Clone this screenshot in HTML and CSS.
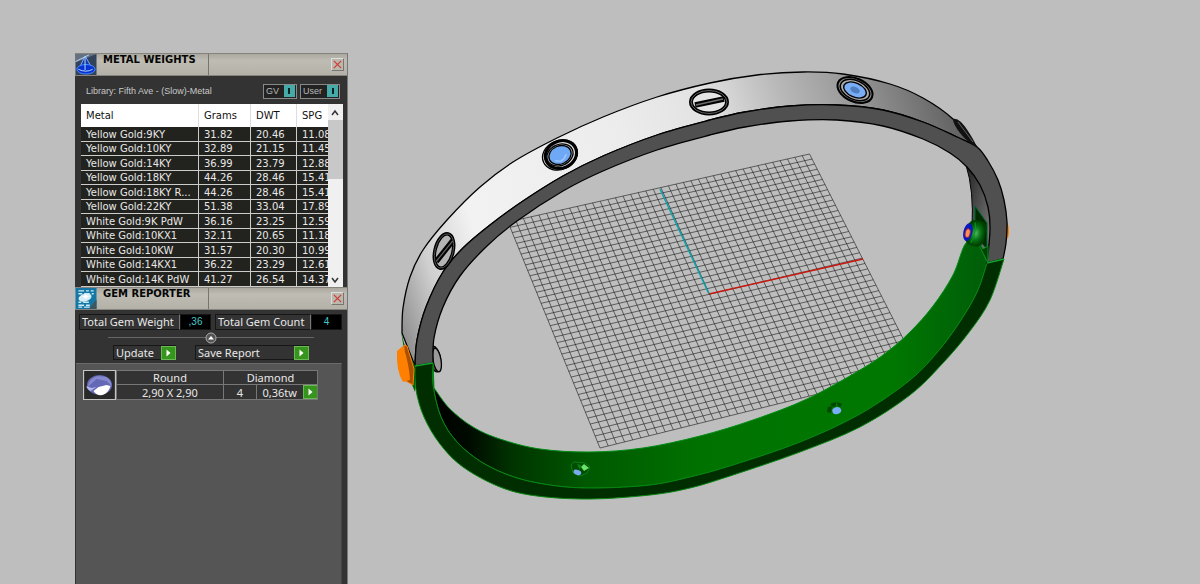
FILE: index.html
```html
<!DOCTYPE html>
<html lang="en">
<head>
<meta charset="utf-8">
<title>Bracelet – Metal Weights</title>
<link rel="stylesheet" href="styles.css">
</head>
<body>
<main class="desktop">
  <svg class="scene" viewBox="0 0 1200 584" preserveAspectRatio="xMinYMin meet" role="img" aria-label="Bracelet model in perspective view">
    <defs>
      <linearGradient id="metal" gradientUnits="userSpaceOnUse" x1="402" y1="340" x2="978" y2="150">
        <stop offset="0" stop-color="#8c8c8c"/><stop offset=".08" stop-color="#cfcfcf"/><stop offset=".17" stop-color="#f2f2f2"/>
        <stop offset=".45" stop-color="#ececec"/><stop offset=".6" stop-color="#e2e2e2"/><stop offset=".72" stop-color="#b8b8b8"/><stop offset=".84" stop-color="#969696"/><stop offset="1" stop-color="#5c5c5c"/>
      </linearGradient>
      <linearGradient id="green" gradientUnits="userSpaceOnUse" x1="435" y1="0" x2="990" y2="0">
        <stop offset="0" stop-color="#000"/><stop offset=".06" stop-color="#000a00"/><stop offset=".14" stop-color="#003400"/><stop offset=".27" stop-color="#005800"/>
        <stop offset=".48" stop-color="#007200"/><stop offset=".82" stop-color="#007800"/><stop offset="1" stop-color="#005c0a"/>
      </linearGradient>
      <linearGradient id="inside" x1="0" y1="0" x2="1" y2="1"><stop offset="0" stop-color="#222"/><stop offset="1" stop-color="#8a8a8a"/></linearGradient>
      <radialGradient id="barrel"><stop offset="0" stop-color="#55b560"/><stop offset=".5" stop-color="#087818"/><stop offset="1" stop-color="#004000"/></radialGradient>
    </defs>
    <path id="grid" class="grid"/>
    <path class="axis-y" d="M709 294 660 189"/>
    <path class="axis-x" d="M709 294 863 259"/>

    <g class="ink">
      <ellipse cx="435" cy="359" rx="5.500" ry="13" fill="#555" transform="rotate(-10 435 359)"/>
      <ellipse cx="437" cy="360" rx="4" ry="12" fill="#999" transform="rotate(-10 437 360)"/>
    </g>
    <path d="M1005 222q4 0 4 9t-4 9z" fill="#ff8000"/>
    <path d="M966 165Q974 190 972 228L988 264 993 210 982 180z" fill="url(#inside)" stroke="#000"/>
    <path d="M975 206 987 223 987 249 975 236z" fill="#002c00" stroke="#063"/>
    <path id="green-inner" fill="url(#green)" stroke="#008c14"/>
    <path id="green-side" fill="#002e00" stroke="#07850f"/>
    <path id="white-band" class="ink" fill="url(#metal)"/>
    <path id="dark-band" class="ink" fill="#505050"/>
    <path d="M415 366 433 363M987 263 1004 259" stroke="#11a32a" stroke-width="1.500"/>

    <path d="M401 331 404 343 415 366 415 392 408 375z" fill="#006400"/>
    <path d="M404 345 407 346 414 369 413 385 404 380z" fill="#a85000" stroke="#ff8000"/>
    <path d="M397 351 403 346Q409 363 410 380L403 382Q396 371 397 351z" fill="#ff8000"/>

    <path d="M978 243q4 3 5 6l5-3v17z" fill="#004000" stroke="#0b8f22"/>
    <g transform="rotate(12 972 232)">
      <rect x="967" y="220" width="18" height="25" rx="7" fill="url(#barrel)" stroke="#004400"/>
      <path d="M973 222q4 10 0 21" fill="none" stroke="#0a9824"/>
      <ellipse cx="968" cy="233" rx="4.500" ry="9" fill="#0719bd"/>
      <ellipse cx="968" cy="234" rx="2.500" ry="4.500" fill="#ff9050" stroke="#8b2058"/>
    </g>

    <g class="ink" transform="translate(444 251) rotate(14)">
      <ellipse rx="9" ry="17.500" fill="#b4b4b4" stroke-width="3.500"/><path d="M-5 12 6-12" stroke-width="5.500"/><path d="M-5 12 6-12" stroke="#666" stroke-width="1.200"/>
      <ellipse rx="9" ry="17.500" fill="none" stroke="#6b6b6b" stroke-width=".7"/>
    </g>
    <g class="ink" transform="translate(709 102)">
      <ellipse rx="18" ry="11.500" fill="#e4e4e4" stroke-width="4"/><path d="M-14 3 15-3" stroke-width="5.500"/><path d="M-13 3 14-3" stroke="#6c6c6c" stroke-width="1.500"/>
      <ellipse rx="18" ry="11.500" fill="none" stroke="#777" stroke-width=".8"/>
    </g>
    <g class="ink" transform="translate(560 155) rotate(-24)">
      <ellipse rx="18" ry="14.500" fill="#ddd"/><ellipse cx="1" rx="16" ry="13.500" fill="none" stroke-width="3"/>
      <ellipse rx="13.500" ry="10.500" fill="#c6c6c6"/><ellipse rx="11.500" ry="9" fill="#6fa8f5"/>
      <path d="M-7 3-2 6 2 5 6 2" fill="none" stroke="#a6cbfb"/>
    </g>
    <g class="ink" transform="translate(855 90) rotate(24)">
      <ellipse rx="18.500" ry="11.500" fill="#888" stroke-width="2"/><ellipse rx="15.500" ry="9.500" fill="#aaa" stroke-width="1.500"/>
      <ellipse rx="12" ry="7" fill="#79adf5"/><ellipse rx="5" ry="3" fill="#4f7fc0" stroke="none"/>
    </g>
    <path d="M953 119Q959 117 968 131T976 147Q967 142 960 133T953 119z" fill="#111"/>
    <path d="M958 122 973 142" stroke="#666"/>

    <g transform="translate(580 468)">
      <path d="M-9-3-6-6 5-5 10-1 7 5 0 8-7 5z" fill="#004d00" stroke="#0a8a20" stroke-width=".8"/>
      <path d="M1-1 4-4 9 0 4 3z" fill="#69e468"/><path d="M-3-4 1-3 0 2z" fill="#0c801a"/><ellipse cx="-1" cy="5" rx="4" ry="2.500" fill="#79aaf0" transform="rotate(20)"/>
    </g>
    <g transform="translate(835 408)">
      <path d="M-8 4-7-1-3-2-4 5zM-5-4 1-6 1-2-2-1zM2-6 7-4 5-1 3-2z" fill="#004600"/>
      <ellipse cx="1" cy="3" rx="4.500" ry="3.500" fill="#79adfa" transform="rotate(-15)"/>
    </g>
  </svg>

  <div class="tools">
    <section class="window">
      <header class="titlebar">
        <svg class="app-icon" viewBox="0 0 22 22" aria-hidden="true"><rect width="22" height="22" fill="#34435c"/><path d="M0 0h22L0 9z" fill="#657080"/><path d="M3 17 10 2l8 14" fill="#103ca8" stroke="#7fb1ff"/><ellipse cx="11" cy="16" rx="9.500" ry="5" fill="#0733d0" stroke="#4b92ff"/><path d="M3 16q8 4 15 0M10 3v14M0 8l14-7" stroke="#b9dbff" fill="none"/></svg>
        <h2 class="title">METAL WEIGHTS</h2>
        <button class="close" aria-label="Close metal weights"><svg viewBox="0 0 12 12"><path d="m2 2 8 8m0-8-8 8"/></svg></button>
      </header>
      <div class="metal-body">
        <div class="library">
          <span class="library-name">Library: Fifth Ave - (Slow)-Metal</span>
          <button class="toggle">GV<i class="lamp"></i></button>
          <button class="toggle">User<i class="lamp"></i></button>
        </div>
        <div class="list">
          <div class="list-view">
            <table class="metals">
              <colgroup><col class="c-metal"><col class="c-grams"><col class="c-dwt"><col class="c-spg"></colgroup>
              <thead><tr><th>Metal</th><th>Grams</th><th>DWT</th><th>SPG</th></tr></thead>
              <tbody>
                <tr><td>Yellow Gold:9KY</td><td>31.82</td><td>20.46</td><td>11.08</td></tr>
                <tr><td>Yellow Gold:10KY</td><td>32.89</td><td>21.15</td><td>11.45</td></tr>
                <tr><td>Yellow Gold:14KY</td><td>36.99</td><td>23.79</td><td>12.88</td></tr>
                <tr><td>Yellow Gold:18KY</td><td>44.26</td><td>28.46</td><td>15.41</td></tr>
                <tr><td>Yellow Gold:18KY R...</td><td>44.26</td><td>28.46</td><td>15.41</td></tr>
                <tr><td>Yellow Gold:22KY</td><td>51.38</td><td>33.04</td><td>17.89</td></tr>
                <tr><td>White Gold:9K PdW</td><td>36.16</td><td>23.25</td><td>12.59</td></tr>
                <tr><td>White Gold:10KX1</td><td>32.11</td><td>20.65</td><td>11.18</td></tr>
                <tr><td>White Gold:10KW</td><td>31.57</td><td>20.30</td><td>10.99</td></tr>
                <tr><td>White Gold:14KX1</td><td>36.22</td><td>23.29</td><td>12.61</td></tr>
                <tr><td>White Gold:14K PdW</td><td>41.27</td><td>26.54</td><td>14.37</td></tr>
              </tbody>
            </table>
          </div>
          <div class="scrollbar">
            <button class="arrow" aria-label="Scroll up"><svg viewBox="0 0 15 15"><path d="m4 10 3-4 3 4"/></svg></button>
            <div class="thumb"></div>
            <button class="arrow arrow-down" aria-label="Scroll down"><svg viewBox="0 0 15 15"><path d="m4 6 3 4 3-4"/></svg></button>
          </div>
        </div>
      </div>
    </section>

    <section class="window gem-window">
      <header class="titlebar">
        <svg class="app-icon" viewBox="0 0 22 22" aria-hidden="true"><rect width="22" height="22" fill="#1677a5"/><path d="M3 3h6m2 0h3m2 0h3M3 6h4m2 0h6m2 0h2M3 15h3m2 0h6M3 18h6m2 0h4M3 20h4m2 0h6" stroke="#c8ecfa" stroke-width="1.500"/><ellipse cx="10" cy="10" rx="7" ry="4" fill="#d8edf5" transform="rotate(-15 10 10)"/><path d="m7 9 4-2 3 2-3 2z" fill="#fff"/><path d="M22 12v10H14z" fill="#40565f"/></svg>
        <h2 class="title">GEM REPORTER</h2>
        <button class="close" aria-label="Close gem reporter"><svg viewBox="0 0 12 12"><path d="m2 2 8 8m0-8-8 8"/></svg></button>
      </header>
      <div class="gem-controls">
        <div class="totals">
          <span class="label">Total Gem Weight</span><output class="value">,36</output>
          <span class="label second">Total Gem Count</span><output class="value">4</output>
        </div>
        <div class="divider"><button class="knob" aria-label="Collapse"><svg viewBox="0 0 12 12"><circle cx="6" cy="6" r="5" fill="#555" stroke="#aaa"/><path d="M3 7.500 6 4l3 3.500z" fill="#fff"/></svg></button></div>
        <div class="actions">
          <button class="action">Update<svg class="go" viewBox="0 0 15 15"><path d="m5 3 5 4.500L5 12z"/></svg></button>
          <button class="action save">Save Report<svg class="go" viewBox="0 0 15 15"><path d="m5 3 5 4.500L5 12z"/></svg></button>
        </div>
      </div>
      <div class="gem-list">
        <div class="gem">
          <svg class="gem-icon" viewBox="0 0 30 28" role="img" aria-label="Round gem"><rect width="30" height="28" fill="#292929"/><ellipse cx="15" cy="14" rx="12.500" ry="10" fill="#6468b6"/><path d="M3 16q1-8 10-11l9 1q5 3 5 9l-5-5-10-2z" fill="#8589cd"/><path d="m9 20 5-4 8-2 4 1q-2 7-8 9-6 1-9-4z" fill="#fff"/><path d="m2 15 5 2 5-1-6 4q-4-2-4-5z" fill="#b3b6e8"/></svg>
          <table class="gem-table">
            <colgroup><col class="g-size"><col class="g-count"><col class="g-weight"><col class="g-go"></colgroup>
            <tr><td>Round</td><td colspan="3">Diamond</td></tr>
            <tr><td>2,90 X 2,90</td><td>4</td><td class="weight">0,36tw</td><td class="go-cell"><button class="go-button" aria-label="Gem options"><svg class="go" viewBox="0 0 15 15"><path d="m5 3 5 4.500L5 12z"/></svg></button></td></tr>
          </table>
        </div>
      </div>
    </section>
  </div>
</main>
<script src="scene.js"></script>
</body>
</html>
```
FILE: styles.css
```css
* { box-sizing: border-box; }
body { margin: 0; background: #bebebe; font: 10px/14px "DejaVu Sans", Verdana, sans-serif; color: #e8e8e8; }
button { margin: 0; padding: 0; border: 0; background: none; font: inherit; color: inherit; }
svg { display: block; }

.desktop { position: relative; display: flex; min-height: 100vh; overflow: hidden; }
.scene { position: absolute; inset: 0; width: 100%; height: auto; }
.grid { fill: none; stroke: #111; stroke-opacity: .72; stroke-width: .8; }
.axis-x { stroke: #c8190f; stroke-width: 1.5; }
.axis-y { stroke: #0aa2a8; stroke-width: 1.5; }
.ink { stroke: #000; stroke-width: 1.3; }

.tools { position: relative; display: flex; flex-direction: column; width: 273px; margin: 53px 0 0 75px; }
.window { background: #333; border-right: 1px solid #777; }
.gem-window { flex: 1; display: flex; flex-direction: column; }
.titlebar { display: flex; align-items: center; height: 23px; background: linear-gradient(#aaa89f, #bfbcb3 30%, #b4b1a8); border: 1px solid #85837c; border-width: 1px 0; color: #050505; }
.app-icon { flex: none; width: 22px; height: 21px; }
.title { align-self: stretch; width: 112px; margin: 0; padding-left: 6px; border-right: 1px solid #77756f; font-size: 10px; line-height: 11px; white-space: nowrap; }
.close { width: 13px; height: 13px; margin: 0 3px 0 auto; border: 1px solid; border-color: #ddd #77756f #77756f #ddd; background: #bbb8ae; }
.close path { fill: none; stroke: #d33a36; stroke-width: 1.3; }

.metal-body { padding: 7px 4px 0 6px; }
.library { display: flex; align-items: center; gap: 3px; height: 21px; padding: 0 3px 5px 5px; }
.library-name { flex: 1; font: 9px/14px "Liberation Sans", Arial, sans-serif; color: #c8c8c8; white-space: nowrap; }
.toggle { display: flex; align-items: center; justify-content: space-between; gap: 5px; height: 15px; padding: 0 1px 0 2px; border: 1px solid #888; background: #222; font: 9px/13px "Liberation Sans", Arial, sans-serif; color: #b8b8b8; }
.lamp { display: grid; place-items: center; width: 11px; height: 12px; background: #46aaa9; }
.lamp::after { content: ""; width: 2px; height: 6px; background: #062626; }
.list { display: flex; height: 183px; }
.list-view { flex: 1; min-width: 0; overflow: hidden; }
.metals { width: 262px; border-collapse: separate; border-spacing: 0; table-layout: fixed; }
.c-metal { width: 118px; }
.c-grams { width: 52px; }
.c-dwt { width: 46px; }
.c-spg { width: 46px; }
.metals th { height: 23px; padding: 0 5px; border-right: 1px solid #ddd; background: #fff; color: #111; font-weight: 400; text-align: left; }
.metals td { height: 15px; padding: 0 5px; overflow: hidden; border-right: 1px solid #ccc; border-bottom: 1px solid #ccc; background: #22221e; line-height: 13px; white-space: nowrap; }
.metals tr:nth-child(even) td { height: 14px; }
.scrollbar { display: flex; flex-direction: column; width: 15px; background: #f0f0f0; }
.arrow { height: 16px; }
.arrow path { fill: none; stroke: #333; stroke-width: 1.5; }
.arrow-down { margin-top: auto; }
.thumb { height: 59px; background: #c8c8c8; }

.gem-window { font: 11px/14px "Noto Sans", "DejaVu Sans", sans-serif; }
.gem-window .title { font: bold 10px/11px "DejaVu Sans", sans-serif; }
.gem-controls { padding: 4px 4px 3px; }
.totals { display: flex; height: 16px; line-height: 13px; }
.label { width: 101px; padding-left: 2px; border: 1px solid #161616; border-width: 1px 0 1px 1px; border-right: 1px solid #777; white-space: nowrap; }
.second { width: 96px; margin-left: 4px; }
.value { width: 31px; border: 1px solid #161616; background: #000; color: #47c8c8; text-align: center; font: 10px/14px "Liberation Sans", Arial, sans-serif; }
.divider { display: flex; align-items: center; justify-content: center; height: 15px; margin: 0 29px; background: linear-gradient(#666, #666) center / 100% 1px no-repeat; }
.knob { width: 12px; height: 12px; }
.actions { display: flex; gap: 19px; padding-left: 34px; }
.action { display: flex; justify-content: space-between; width: 63px; height: 15px; padding-left: 2px; border: 1px solid #171717; border-right: 0; white-space: nowrap; line-height: 13px; }
.save { width: 114px; }
.go { width: 15px; height: 14px; background: #35951c; border: 1px solid #6bb955; }
.go path { fill: #fff; }
.gem-list { flex: 1; width: 266px; margin-left: 1px; padding: 6px 0 0 7px; border-top: 1px solid #6b6b6b; border-right: 1px solid #444; background: #555; }
.gem { display: flex; }
.gem-icon { width: 33px; height: 30px; border: 1px solid #c4c4c4; }
.gem-table { width: 201px; height: 30px; border-collapse: collapse; table-layout: fixed; background: #333; }
.g-size { width: 107px; }
.g-count { width: 33px; }
.g-weight { width: 46px; }
.g-go { width: 15px; }
.gem-table td { height: 14px; padding: 0; border: 1px solid #777; text-align: center; line-height: 13px; white-space: nowrap; }
.gem-table .weight { border-right: 0; }
.gem-table .go-cell { border-left: 0; }
.go-button { display: block; }
```
FILE: scene.js
```js
// Construction grid: a unit square mapped onto four projected corners.
const TL = [508, 222], TR = [809.5, 154], BR = [918.5, 369], BL = [600, 448];
function makeProjection([x0, y0], [x1, y1], [x2, y2], [x3, y3]) {
  const dx1 = x1 - x2, dx2 = x3 - x2, dx3 = x0 - x1 + x2 - x3;
  const dy1 = y1 - y2, dy2 = y3 - y2, dy3 = y0 - y1 + y2 - y3;
  const det = dx1 * dy2 - dx2 * dy1;
  const g = (dx3 * dy2 - dx2 * dy3) / det;
  const h = (dx1 * dy3 - dx3 * dy1) / det;
  return (u, v) => {
    const w = g * u + h * v + 1;
    return [((x1 - x0 + g * x1) * u + (x3 - x0 + h * x3) * v + x0) / w,
            ((y1 - y0 + g * y1) * u + (y3 - y0 + h * y3) * v + y0) / w];
  };
}
const project = makeProjection(TL, TR, BR, BL);
const cells = 40;
let grid = "";
for (let i = 0; i <= cells; i++) {
  const t = i / cells;
  grid += `M${project(t, 0)}L${project(t, 1)}M${project(0, t)}L${project(1, t)}`;
}
document.getElementById("grid").setAttribute("d", grid);

// Smooth curve through a list of points.
function curve(p) {
  let d = `${p[0]}`;
  for (let i = 0; i < p.length - 1; i++) {
    const a = p[i - 1] || p[i], b = p[i], c = p[i + 1], e = p[i + 2] || c;
    d += `C${b[0] + (c[0] - a[0]) / 6},${b[1] + (c[1] - a[1]) / 6} ${c[0] - (e[0] - b[0]) / 6},${c[1] - (e[1] - b[1]) / 6} ${c}`;
  }
  return d;
}
function band(id, one, two) {
  document.getElementById(id).setAttribute("d", `M${curve(one)}L${curve([...two].reverse())}Z`);
}
const outer = [[402,333],[403,308],[410,277],[423,250],[447,220],[480,187],[513,162],[557,138],[603,117],[657,97],[710,83],[757,75],[803,72],[843,74],[890,84],[923,98],[953,119],[977,147]];
const rim = [[415,366],[417,340],[426,307],[443,272],[463,248],[490,225],[523,201],[563,176],[603,156],[657,135],[710,120],[745,112],[790,106],[837,105],[883,110],[923,122],[957,137],[977,147]];
const rimEnd = [[988,161],[998,180],[1004,200],[1007,222],[1006,243],[1003,259]];
const inner = [[433,363],[434,338],[443,307],[460,276],[487,246],[517,221],[563,191],[603,171],[657,150],[710,135],[745,127],[790,121],[837,120],[883,126],[923,139],[950,153],[967,167],[980,185],[988,207],[990,230],[987,263]];
const greenTop = [[434,388],[450,409],[473,427],[500,439],[540,449],[590,452],[643,448],[700,436],[753,420],[807,399],[860,370],[887,352],[910,332],[933,306],[953,275],[966,243],[980,243]];
const greenEdge = [[433,363],[433,385],[441,417],[457,442],[483,463],[517,478],[557,486],[597,488],[650,485],[690,477],[733,465],[800,442],[860,414],[910,380],[940,349],[963,317],[978,290],[987,263]];
const greenOuter = [[415,366],[416,390],[424,417],[440,444],[463,467],[500,487],[537,496],[590,499],[650,495],[690,488],[733,475],[800,452],[860,427],[910,395],[943,363],[970,331],[990,300],[1004,259]];
band("white-band", outer, rim);
band("dark-band", rim.concat(rimEnd), inner);
band("green-inner", greenTop, greenEdge);
band("green-side", greenEdge, greenOuter);
```
